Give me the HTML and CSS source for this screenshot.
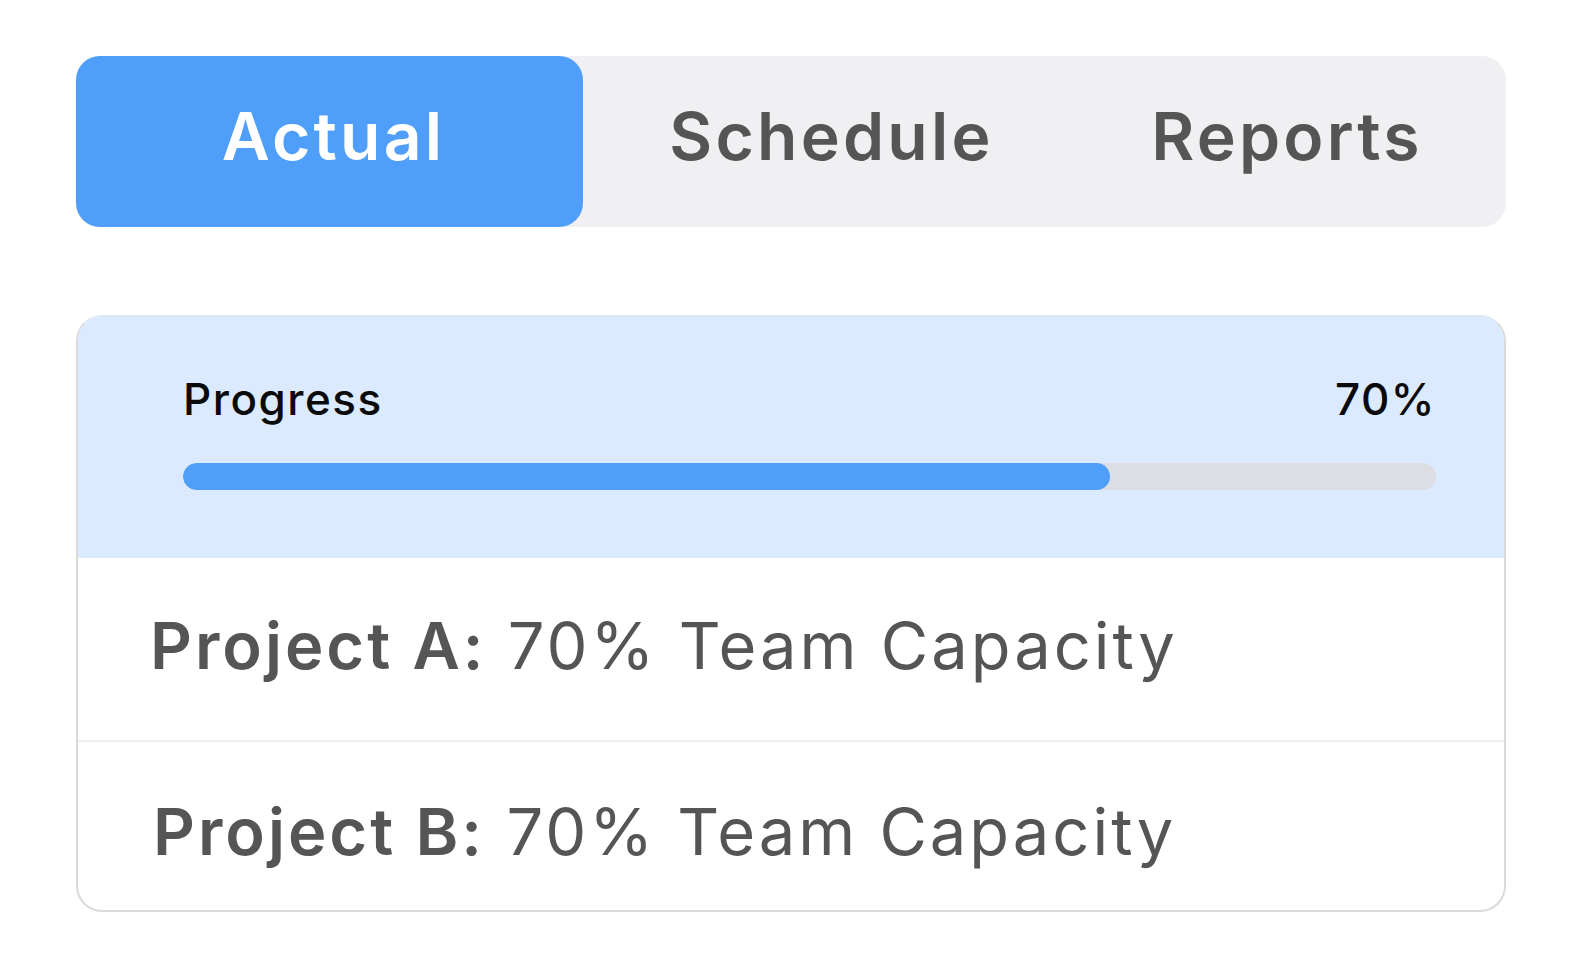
FILE: index.html
```html
<!DOCTYPE html>
<html lang="en">
<head>
<meta charset="utf-8">
<title>Capacity</title>
<link rel="stylesheet" href="styles.css">
</head>
<body>
<main class="page">
  <nav class="tabs">
    <div class="tab tab-active">Actual</div>
    <div class="tab tab-mid">Schedule</div>
    <div class="tab tab-last">Reports</div>
  </nav>
  <section class="card">
    <div class="card-head">
      <div class="head-row">
        <span class="head-label">Progress</span>
        <span class="head-label">70%</span>
      </div>
      <div class="track"><div class="fill" style="width:74%"></div></div>
    </div>
    <div class="row row-first"><span class="row-text"><b>Project A:</b> 70% Team Capacity</span></div>
    <div class="row row-second"><span class="row-text"><b>Project B:</b> 70% Team Capacity</span></div>
  </section>
</main>
</body>
</html>
```
FILE: styles.css
```css
html, body {
  margin: 0;
  padding: 0;
  background: #ffffff;
}
body {
  font-family: Inter, "Noto Sans", sans-serif;
}
.page {
  padding: 56px 0 0 76px;
  width: 1430px;
}
.tabs {
  display: grid;
  grid-template-columns: 507px 497px 1fr;
  height: 171px;
  background: #f0f0f2;
  border-radius: 24px;
}
.tab {
  display: flex;
  align-items: center;
  justify-content: center;
  font-size: 66px;
  font-weight: 600;
  letter-spacing: 3.2px;
  color: #555555;
  padding-bottom: 12px;
}
.tab-active {
  background: #4f9ef9;
  color: #ffffff;
  border-radius: 24px;
  padding-left: 8px;
}
.tab-last {
  padding-right: 12px;
}
.card {
  margin-top: 88px;
  border: 2px solid #dadada;
  border-top-color: #dde8f6;
  border-radius: 26px;
  overflow: hidden;
}
.card-head {
  background: #dbeafe;
  height: 241px;
  padding: 55px 68px 0 105px;
  box-sizing: border-box;
}
.head-row {
  display: flex;
  justify-content: space-between;
  align-items: baseline;
}
.head-label {
  font-size: 44px;
  font-weight: 500;
  color: #0a0a0a;
  letter-spacing: 1.5px;
}
.track {
  margin-top: 37px;
  height: 27px;
  background: #dcdee3;
  border-radius: 14px;
  overflow: hidden;
}
.fill {
  height: 100%;
  background: #4f9ef9;
  border-radius: 14px;
}
.row {
  display: flex;
  align-items: center;
  padding-left: 72px;
}
.row-first {
  height: 182px;
  border-bottom: 2px solid #eeeff1;
}
.row-first .row-text {
  padding-bottom: 8px;
}
.row-second {
  height: 168px;
  padding-left: 75px;
}
.row-second .row-text {
  padding-top: 10px;
}
.row-text {
  font-size: 65px;
  font-weight: 400;
  color: #555555;
  letter-spacing: 3px;
}
.row-text b {
  font-weight: 600;
}
```
